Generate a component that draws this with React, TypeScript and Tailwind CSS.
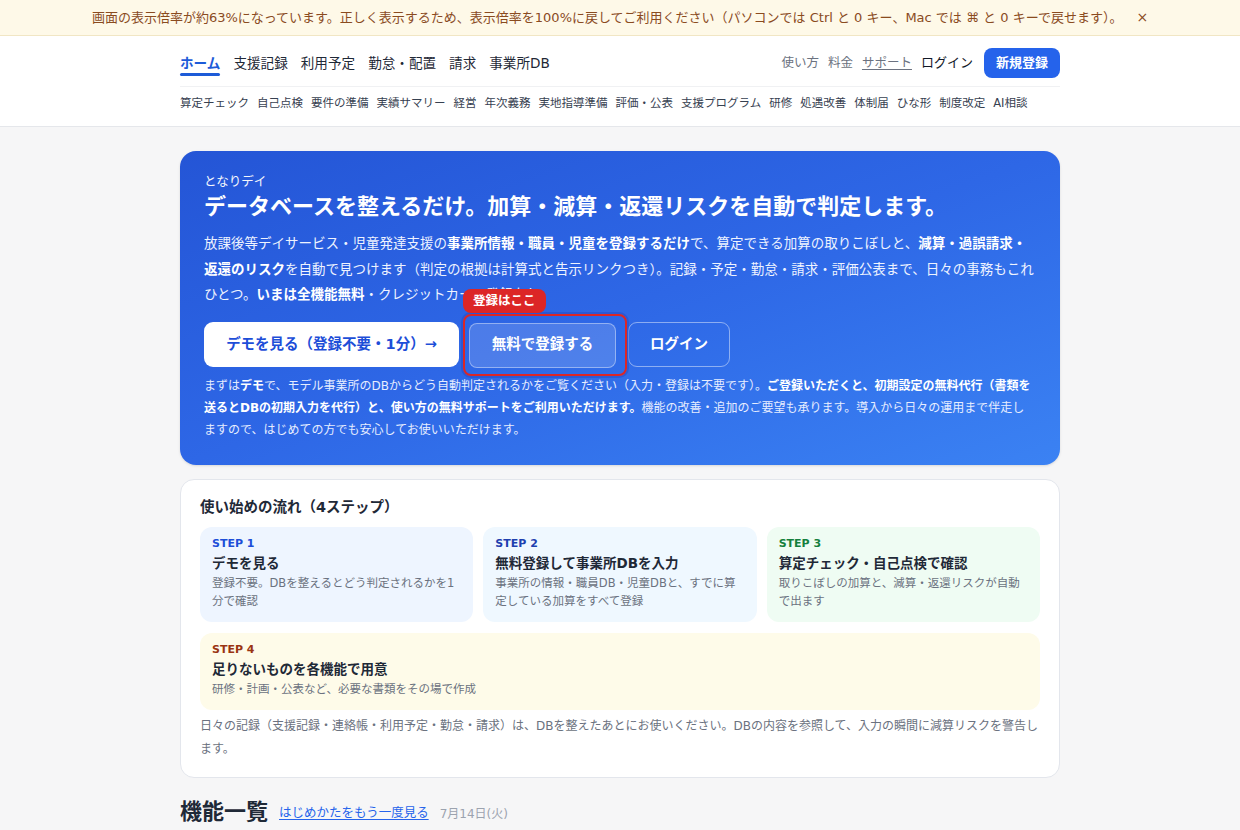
import React from "react";

/* -------------------------------------------------------------------------- */

const FONT = '"DejaVu Sans", "Noto Sans CJK JP", sans-serif';

const mainNav = ["ホーム", "支援記録", "利用予定", "勤怠・配置", "請求", "事業所DB"];

const subNav = [
  "算定チェック",
  "自己点検",
  "要件の準備",
  "実績サマリー",
  "経営",
  "年次義務",
  "実地指導準備",
  "評価・公表",
  "支援プログラム",
  "研修",
  "処遇改善",
  "体制届",
  "ひな形",
  "制度改定",
  "AI相談",
];

type Step = {
  label: string;
  title: string;
  body: string;
  box: string;
  tone: string;
};

const steps: Step[] = [
  {
    label: "STEP 1",
    title: "デモを見る",
    body: "登録不要。DBを整えるとどう判定されるかを1分で確認",
    box: "bg-[#eef5ff]",
    tone: "text-[#1d4ed8]",
  },
  {
    label: "STEP 2",
    title: "無料登録して事業所DBを入力",
    body: "事業所の情報・職員DB・児童DBと、すでに算定している加算をすべて登録",
    box: "bg-[#eff8ff]",
    tone: "text-[#1e40af]",
  },
  {
    label: "STEP 3",
    title: "算定チェック・自己点検で確認",
    body: "取りこぼしの加算と、減算・返還リスクが自動で出ます",
    box: "bg-[#effcf3]",
    tone: "text-[#15803d]",
  },
];

const Header = () => (
  <header className="border-b border-[#e5e7eb] bg-white">
    <div className="mx-auto w-[880px]">
      <div className="flex h-[50px] items-center justify-between pt-[4px]">
        <nav className="flex items-center gap-[13px] text-[13.6px] text-[#1f2937]">
          {mainNav.map((item, i) =>
            i === 0 ? (
              <span
                key={item}
                className="relative font-bold text-[#1d5bd8] after:absolute after:-bottom-[3px] after:left-0 after:h-[3px] after:w-full after:rounded after:bg-[#1d5bd8]"
              >
                {item}
              </span>
            ) : (
              <span key={item}>{item}</span>
            )
          )}
        </nav>
        <div className="flex items-center gap-[9px] text-[12.5px]">
          <span className="text-[#6b7280]">使い方</span>
          <span className="text-[#6b7280]">料金</span>
          <span className="text-[#6b7280] underline underline-offset-2">サポート</span>
          <span className="text-[13px] text-[#111827]">ログイン</span>
          <span className="ml-[2px] rounded-[8px] bg-[#2563eb] px-[12px] py-[5px] text-[13px] font-bold text-white">
            新規登録
          </span>
        </div>
      </div>
      <div className="h-px bg-[#f0f1f3]" />
      <div className="flex h-[39px] items-center gap-[8px] pb-[6px] text-[11.5px] text-[#374151]">
        {subNav.map((item) => (
          <span key={item}>{item}</span>
        ))}
      </div>
    </div>
  </header>
);

const Hero = () => (
  <section className="rounded-[16px] bg-linear-to-br from-[#2455d6] via-[#2e67e6] to-[#3b82f3] px-[24px] pb-[24px] pt-[22px] text-white shadow-sm">
    <p className="text-[12.5px] leading-[18px] opacity-95">となりデイ</p>
    <h1 className="text-[22px] font-bold leading-[32px]">
      データベースを整えるだけ。加算・減算・返還リスクを自動で判定します。
    </h1>
    <p className="mt-[8px] text-[13.5px] leading-[25.5px] text-[#eef3ff]">
      放課後等デイサービス・児童発達支援の
      <b className="text-white">事業所情報・職員・児童を登録するだけ</b>
      で、算定できる加算の取りこぼしと、
      <b className="text-white">減算・過誤請求・返還のリスク</b>
      を自動で見つけます（判定の根拠は計算式と告示リンクつき）。記録・予定・勤怠・請求・評価公表まで、日々の事務もこれひとつ。
      <b className="text-white">いまは全機能無料</b>・クレジットカード登録なし。
    </p>

    <div className="mt-[6px] flex items-center">
      <button className="h-[45px] w-[255px] rounded-[9px] bg-white text-[14.5px] font-bold text-[#1d4ed8]">
        デモを見る（登録不要・1分）→
      </button>
      <div className="relative ml-[4px] rounded-[8px] border-2 border-[#dc2626] pb-[6px] pl-[4px] pr-[9px] pt-[7px] shadow-[0_0_0_2px_rgba(37,60,180,0.35)]">
        <span className="absolute -top-[27px] -left-[2px] rounded-[8px] bg-[#dc2626] px-[10px] py-[3px] text-[12.5px] font-bold leading-[18px] text-white">
          登録はここ
        </span>
        <button className="h-[45px] w-[147px] rounded-[8px] border border-white/40 bg-white/15 text-[14.5px] font-bold text-white">
          無料で登録する
        </button>
      </div>
      <button className="ml-[1px] h-[45px] w-[102px] rounded-[9px] border border-white/45 text-[14.5px] font-bold text-white">
        ログイン
      </button>
    </div>

    <p className="-mt-[1px] text-[12px] leading-[22px] text-[#e6edff]">
      まずは<b className="text-white">デモ</b>
      で、モデル事業所のDBからどう自動判定されるかをご覧ください（入力・登録は不要です）。
      <b className="text-white">
        ご登録いただくと、初期設定の無料代行（書類を送るとDBの初期入力を代行）と、使い方の無料サポートをご利用いただけます。
      </b>
      機能の改善・追加のご要望も承ります。導入から日々の運用まで伴走しますので、はじめての方でも安心してお使いいただけます。
    </p>
  </section>
);

const StepBox = ({
  label,
  title,
  body,
  box,
  tone,
}: Step) => (
  <div className={`rounded-[12px] px-[12px] pb-[12px] pt-[8px] ${box}`}>
    <p className={`text-[11px] font-bold leading-[18px] ${tone}`}>{label}</p>
    <p className="text-[13.5px] font-bold leading-[20px] text-[#1f2937]">{title}</p>
    <p className="mt-[1px] text-[11.5px] leading-[18px] text-[#6b7280]">{body}</p>
  </div>
);

const Flow = () => (
  <section className="mt-[14px] rounded-[14px] border border-[#e3e6ec] bg-white px-[19px] pb-[16px] pt-[16px]">
    <h2 className="text-[14.5px] font-bold leading-[22px] text-[#1f2937]">
      使い始めの流れ（4ステップ）
    </h2>
    <div className="mt-[9px] grid grid-cols-3 gap-[10px]">
      {steps.map((s) => (
        <StepBox key={s.label} {...s} />
      ))}
    </div>
    <div className="mt-[11px]">
      <StepBox
        label="STEP 4"
        title="足りないものを各機能で用意"
        body="研修・計画・公表など、必要な書類をその場で作成"
        box="bg-[#fefbe9]"
        tone="text-[#9a3412]"
      />
    </div>
    <p className="mt-[5px] text-[12px] leading-[23px] text-[#6b7280]">
      日々の記録（支援記録・連絡帳・利用予定・勤怠・請求）は、DBを整えたあとにお使いください。DBの内容を参照して、入力の瞬間に減算リスクを警告します。
    </p>
  </section>
);

export default function App() {
  return (
    <div className="min-h-[830px] bg-[#f6f6f7]" style={{ fontFamily: FONT }}>
      <div className="flex h-[36px] items-center justify-center border-b border-[#f1e6c4] bg-[#fef9e8] text-[13px] text-[#8a4b1f]">
        <span>
          画面の表示倍率が約63%になっています。正しく表示するため、表示倍率を100%に戻してご利用ください（パソコンでは Ctrl と 0 キー、Mac では ⌘ と 0 キーで戻せます）。
        </span>
        <span className="ml-[14px] text-[14px] text-[#8a4b1f]">×</span>
      </div>
      <Header />
      <main className="mx-auto w-[880px] pt-[24px]">
        <Hero />
        <Flow />
        <div className="mt-[19px] flex items-end gap-[11px]">
          <h2 className="text-[22px] font-bold leading-[30px] text-[#1f2937]">機能一覧</h2>
          <span className="pb-[4px] text-[12.5px] text-[#2563eb] underline underline-offset-2">
            はじめかたをもう一度見る
          </span>
          <span className="pb-[4px] text-[12px] text-[#9ca3af]">7月14日(火)</span>
        </div>
      </main>
    </div>
  );
}
